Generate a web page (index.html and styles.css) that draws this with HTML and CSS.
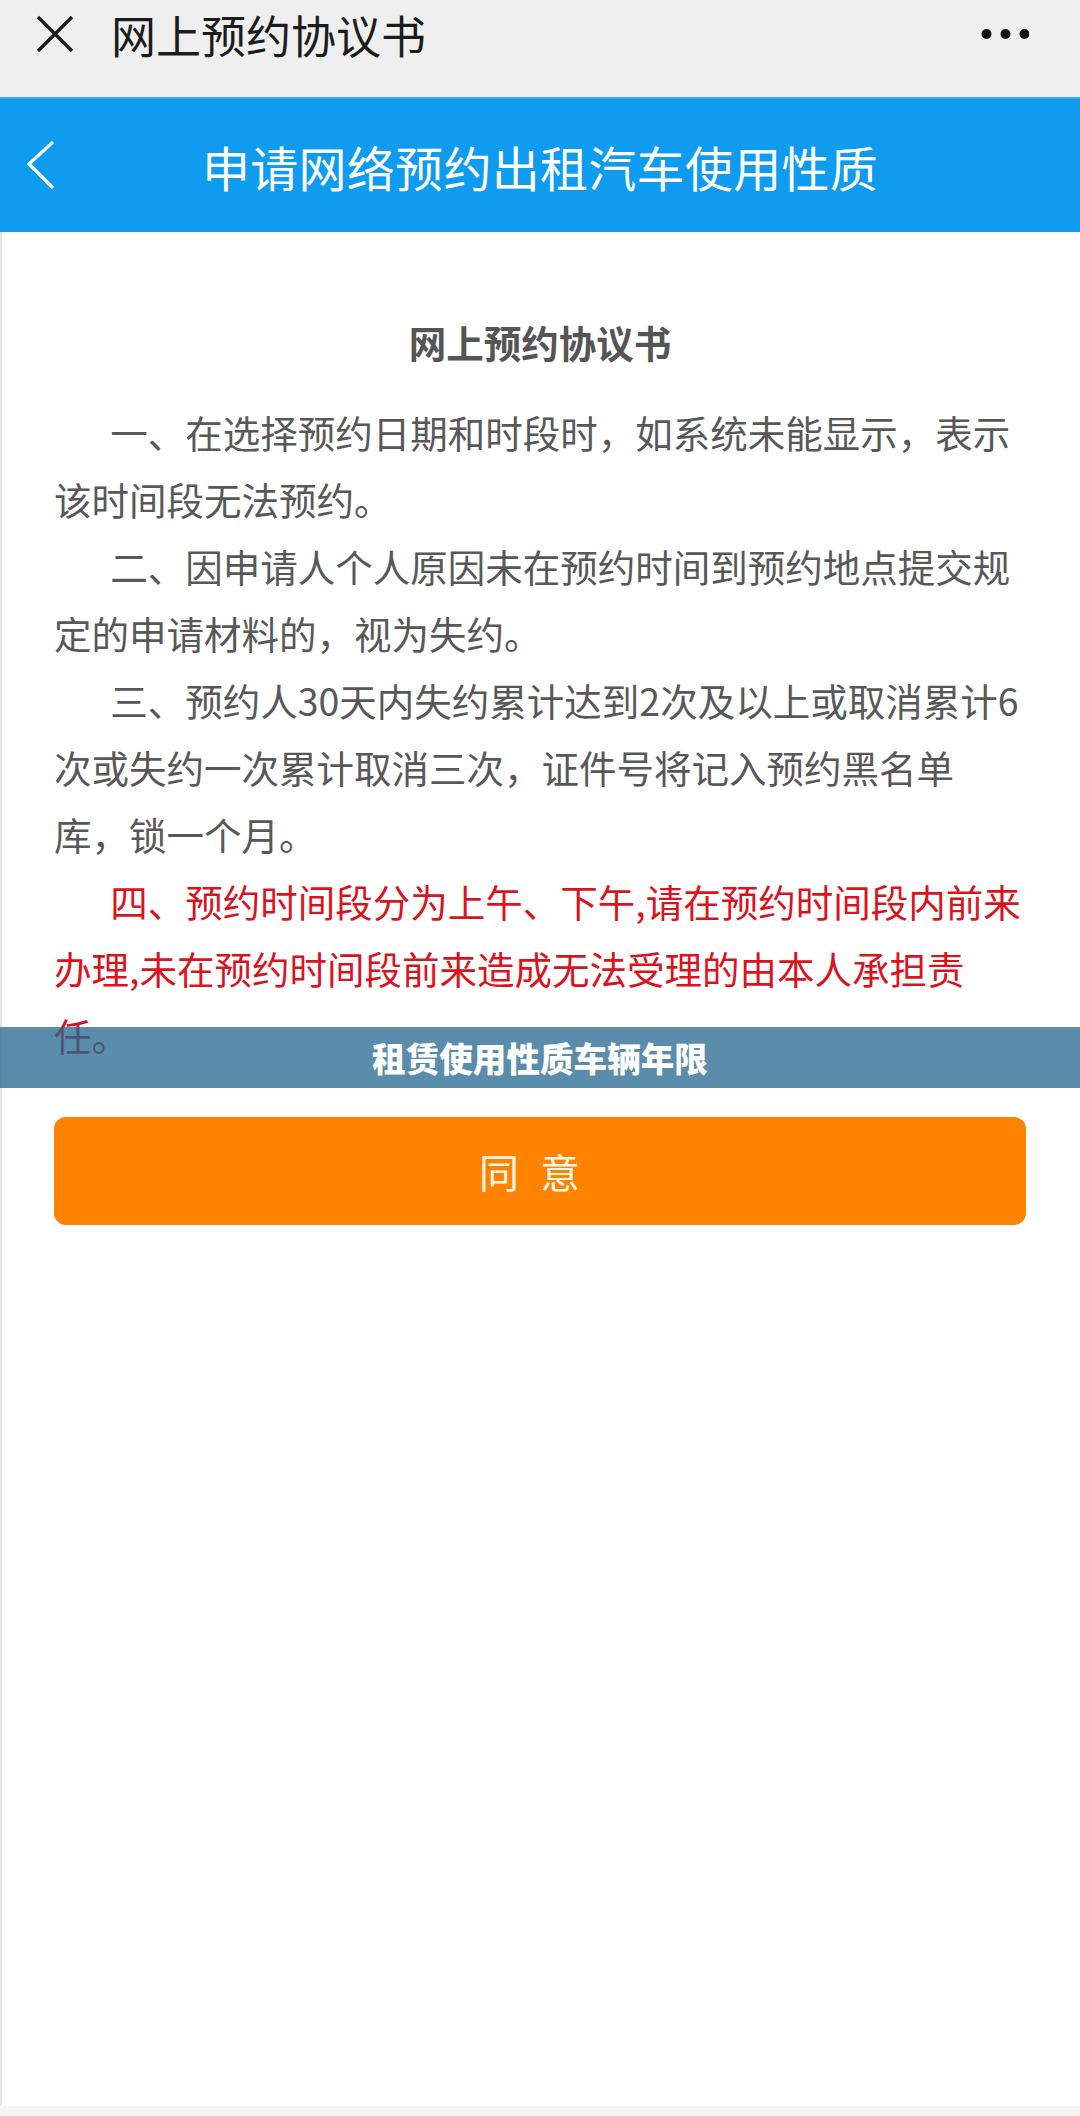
FILE: index.html
```
<!DOCTYPE html>
<html>
<head>
    <meta charset="utf-8">
    <title>网上预约协议书</title>
    <link rel="stylesheet" href="styles.css">
</head>
<body>
    <div class="topbar">
        <svg class="close-icon" width="38" height="38" viewBox="0 0 38 38">
            <path d="M2 2 L36 36 M36 2 L2 36" stroke="#1e1e1e" stroke-width="3.4" fill="none"/>
        </svg>
        <span class="topbar-title">网上预约协议书</span>
        <svg class="more-icon" width="48" height="12" viewBox="0 0 48 12">
            <circle cx="5.5" cy="6" r="5" fill="#111"/>
            <circle cx="24.5" cy="6" r="5" fill="#111"/>
            <circle cx="43.5" cy="6" r="5" fill="#111"/>
        </svg>
    </div>

    <div class="header">
        <svg class="back-icon" width="30" height="50" viewBox="0 0 30 50">
            <polyline points="27,2 3,24 27,48" stroke="#fff" stroke-width="3.2" fill="none"/>
        </svg>
        <h1>申请网络预约出租汽车使用性质</h1>
        <span></span>
    </div>

    <div class="content">
        <h2>网上预约协议书</h2>
        <p>一、在选择预约日期和时段时，如系统未能显示，表示该时间段无法预约。</p>
        <p>二、因申请人个人原因未在预约时间到预约地点提交规定的申请材料的，视为失约。</p>
        <p>三、预约人30天内失约累计达到2次及以上或取消累计6次或失约一次累计取消三次，证件号将记入预约黑名单库，锁一个月。</p>
        <p class="warn">四、预约时间段分为上午、下午,请在预约时间段内前来办理,未在预约时间段前来造成无法受理的由本人承担责任。</p>
        <button class="agree">同意</button>
    </div>

    <!-- caption band laid over the page (see-through) -->
    <div class="caption">租赁使用性质车辆年限</div>

    <div class="footer"></div>
</body>
</html>
```

FILE: styles.css
```
body {
    margin: 0;
    height: 2116px;
    display: flex;
    flex-direction: column;
    background-color: #fff;
    font-family: "Noto Sans CJK SC", "Noto Sans", sans-serif;
    position: relative;
}
.topbar {
    height: 97px;
    box-sizing: border-box;
    padding: 0 51px 29px 36px;
    display: flex;
    align-items: center;
    background-color: #efefef;
    flex-shrink: 0;
}
.topbar-title {
    margin-left: 37px;
    font-size: 45px;
    color: #1c1c1c;
    flex: 1;
}
.header {
    height: 133px;
    border-top: 2px solid #34ade8;
    background-color: #0f9bef;
    display: grid;
    grid-template-columns: 1fr auto 1fr;
    align-items: center;
    padding-left: 26px;
    padding-right: 26px;
    flex-shrink: 0;
}
.back-icon {
    margin-top: -2px;
}
.header h1 {
    margin: 0;
    font-size: 48px;
    font-weight: normal;
    color: #fff;
    letter-spacing: 0.3px;
}
.content {
    flex: 1;
    padding: 76px 54px 0 52px;
    border-left: 2px solid #e6e6e6;
}
.content h2 {
    margin: 0 0 23px;
    font-size: 37.5px;
    line-height: 67px;
    font-weight: bold;
    color: #555;
    text-align: center;
}
.content p {
    margin: 0;
    font-size: 37.5px;
    line-height: 67px;
    text-indent: 1.5em;
    color: #585858;
}
.content p.warn {
    color: #da141f;
}
.agree {
    display: block;
    width: 100%;
    height: 108px;
    margin-top: 49px;
    border: none;
    border-radius: 12px;
    background-color: #ff8200;
    color: #fff6e6;
    font-family: inherit;
    font-size: 40px;
    letter-spacing: 21px;
    cursor: pointer;
}
.caption {
    position: absolute;
    top: 1027px;
    left: 0;
    right: 0;
    height: 61px;
    background-color: rgba(38, 104, 146, 0.76);
    color: #fff;
    font-size: 33.6px;
    font-weight: 900;
    line-height: 61px;
    text-align: center;
}
.footer {
    height: 10px;
    background-color: #f5f5f5;
    flex-shrink: 0;
}
```
